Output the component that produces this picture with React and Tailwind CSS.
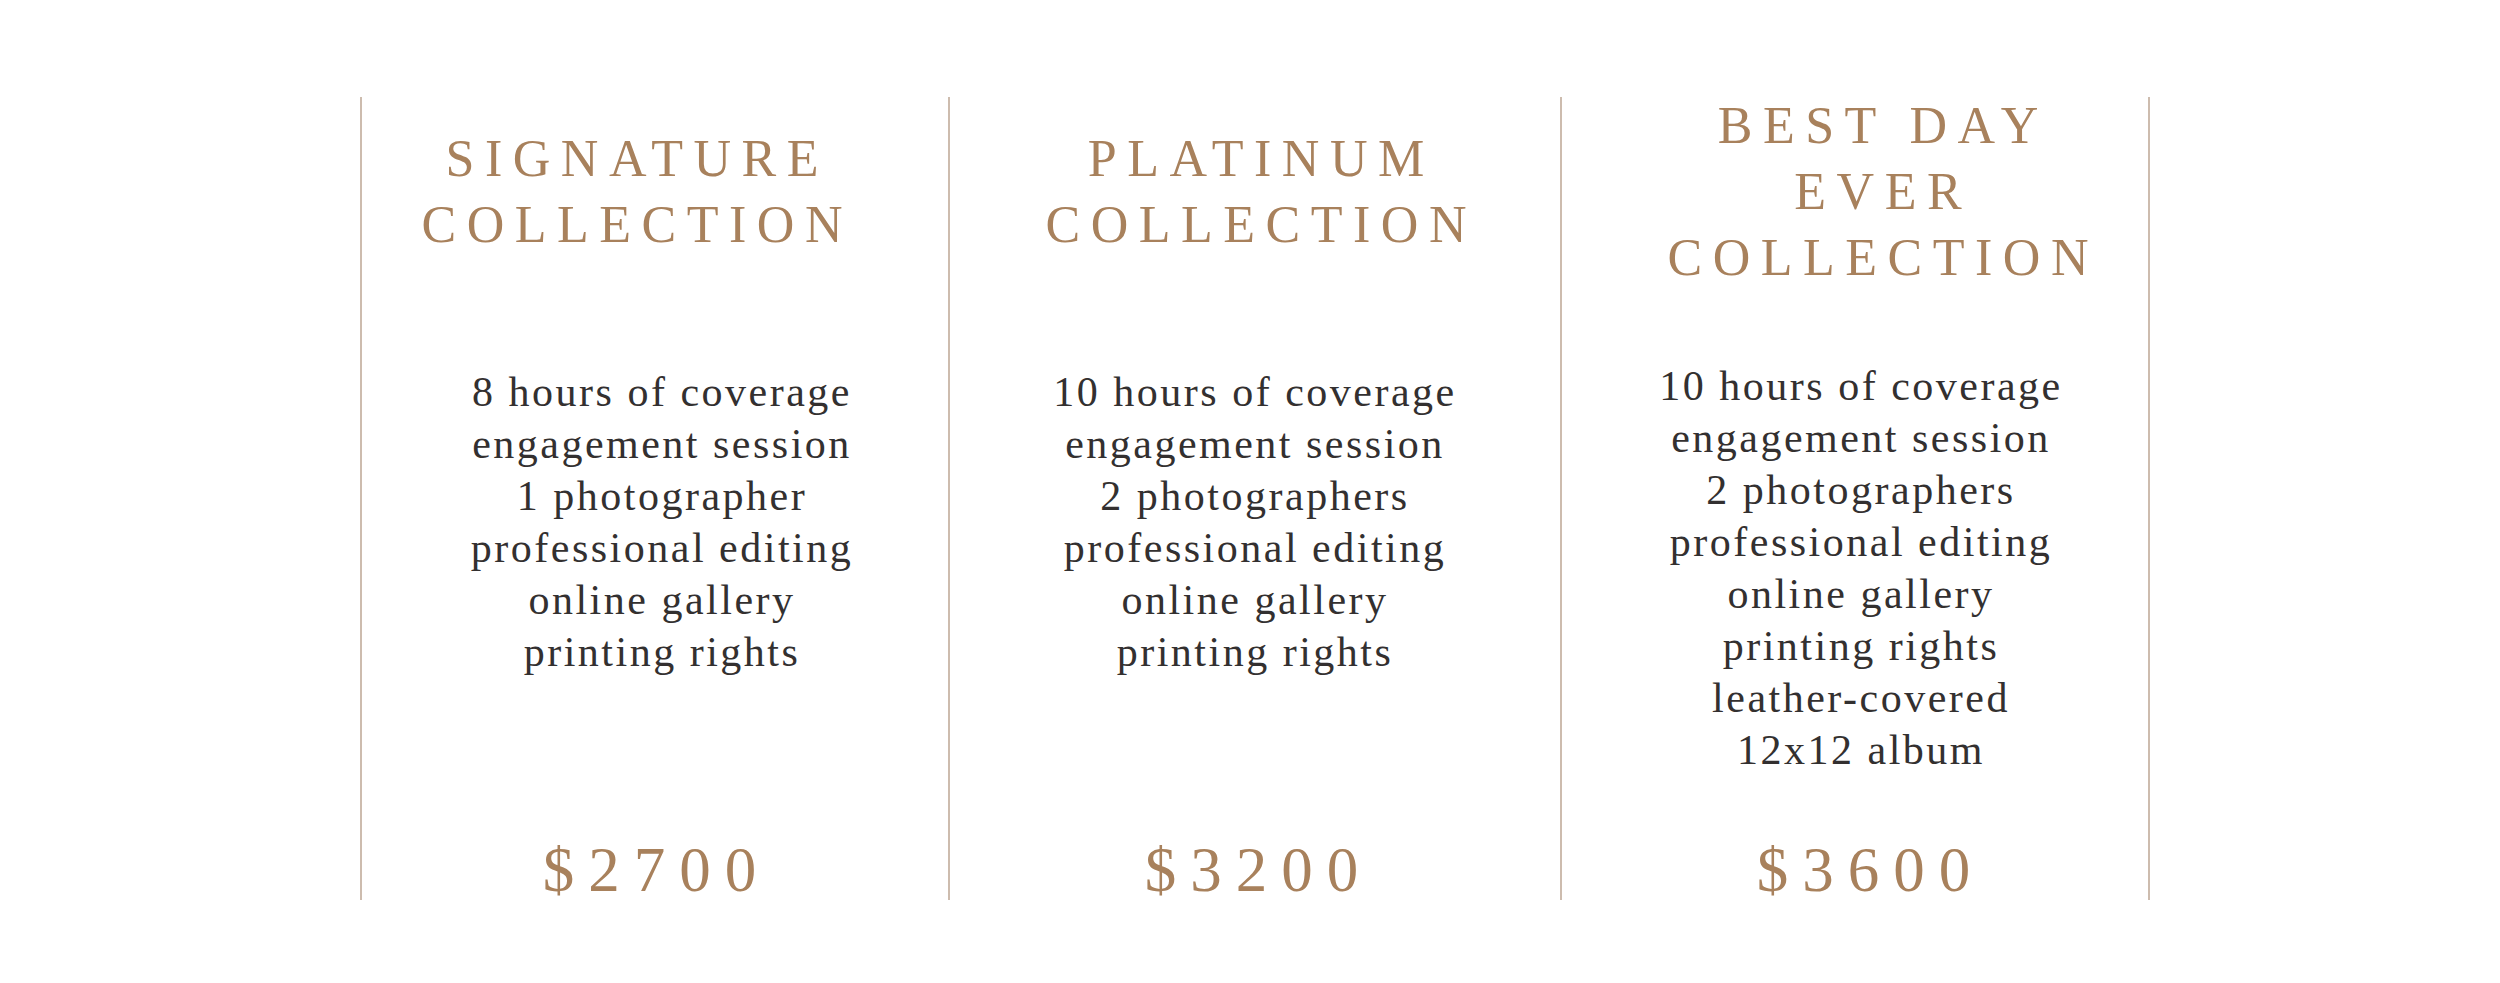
const collections = [
  {
    title: ["SIGNATURE", "COLLECTION"],
    items: [
      "8 hours of coverage",
      "engagement session",
      "1 photographer",
      "professional editing",
      "online gallery",
      "printing rights",
    ],
    price: "$2700",
    width: "w-[586px]",
    titleShift: "pr-[46px]",
    bodyShift: "pl-[14px] mt-[79px]",
    priceShift: "pr-[12px]",
  },
  {
    title: ["PLATINUM", "COLLECTION"],
    items: [
      "10 hours of coverage",
      "engagement session",
      "2 photographers",
      "professional editing",
      "online gallery",
      "printing rights",
    ],
    price: "$3200",
    width: "w-[610px]",
    titleShift: "pl-[2px]",
    bodyShift: "pl-0 mt-[79px]",
    priceShift: "pr-[8px]",
  },
  {
    title: ["BEST DAY", "EVER", "COLLECTION"],
    items: [
      "10 hours of coverage",
      "engagement session",
      "2 photographers",
      "professional editing",
      "online gallery",
      "printing rights",
      "leather-covered",
      "12x12 album",
    ],
    price: "$3600",
    width: "w-[586px]",
    titleShift: "pl-[46px]",
    bodyShift: "pl-[12px] mt-[73px]",
    priceShift: "pl-[16px]",
  },
];

const Divider = () => <div className="w-[2px] h-full bg-[#cdbcae]" />;

const Column = ({ c }) => (
  <div className={`${c.width} h-full flex flex-col items-center`}>
    {/* Title */}
    <div className={`h-[190px] flex items-center justify-center ${c.titleShift}`}>
      <h2 className="pl-[10.5px] text-center font-['Liberation_Serif',serif] text-[52px] leading-[66px] tracking-[10.5px] text-[#a8815c] font-normal">
        {c.title.map((t) => (
          <div key={t}>{t}</div>
        ))}
      </h2>
    </div>

    {/* Features */}
    <div className={c.bodyShift}>
      <ul className="text-center font-['Liberation_Serif',serif] text-[42px] leading-[52px] tracking-[2.5px] text-[#333030]">
        {c.items.map((item) => (
          <li key={item}>{item}</li>
        ))}
      </ul>
    </div>

    {/* Price */}
    <div className={`mt-auto ${c.priceShift}`}>
      <p className="pl-[15px] font-['Liberation_Serif',serif] text-[63px] leading-[60px] tracking-[14px] text-[#a8815c]">
        {c.price}
      </p>
    </div>
  </div>
);

export default function App() {
  return (
    <div className="w-[2500px] h-[983px] bg-white pt-[97px] pl-[360px]">
      <div className="flex h-[803px]">
        <Divider />
        <Column c={collections[0]} />
        <Divider />
        <Column c={collections[1]} />
        <Divider />
        <Column c={collections[2]} />
        <Divider />
      </div>
    </div>
  );
}
